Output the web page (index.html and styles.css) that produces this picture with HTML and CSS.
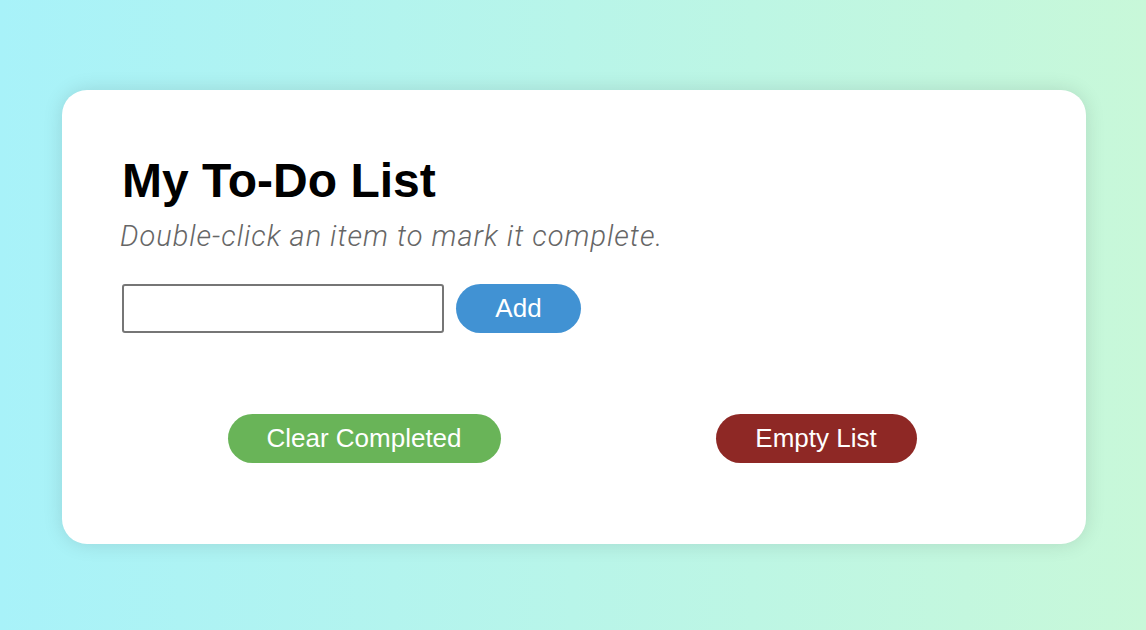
FILE: index.html
```html
<!DOCTYPE html>
<html>
<head>
<meta charset="utf-8">
<link rel="stylesheet" href="styles.css">
</head>
<body>
<div class="card">
  <h1 class="title">My To-Do List</h1>
  <p class="hint">Double-click an item to mark it complete.</p>
  <div class="add-row">
    <input class="item-input" type="text">
    <button class="btn btn-add">Add</button>
  </div>
  <ul class="todo-list"></ul>
  <div class="actions">
    <button class="btn btn-clear">Clear Completed</button>
    <button class="btn btn-empty">Empty List</button>
  </div>
</div>
</body>
</html>
```

FILE: styles.css
```css
html, body {
  margin: 0;
  height: 100%;
}
body {
  background: linear-gradient(to right, #a8f2f9, #c8f8d9);
  font-family: "Liberation Sans", Arial, sans-serif;
  padding: 90px 60px 0 62px;
  box-sizing: border-box;
}
.card {
  background: #fff;
  border-radius: 25px;
  box-shadow: 0 0 20px rgba(0, 0, 0, 0.12);
  padding: 63px 60px 0;
  height: 454px;
  box-sizing: border-box;
}
.title {
  margin: 0;
  font-size: 48px;
  line-height: 56px;
  font-weight: bold;
  color: #000;
}
.hint {
  margin: 10px 0 31px -2px;
  font-family: Roboto, "Liberation Sans", sans-serif;
  font-size: 29px;
  line-height: 34px;
  letter-spacing: 1px;
  font-style: italic;
  font-weight: 300;
  color: #666;
}
.add-row {
  display: flex;
  align-items: center;
  gap: 12px;
}
.item-input {
  width: 322px;
  height: 49px;
  box-sizing: border-box;
  border: 2px solid #767676;
  border-radius: 3px;
  margin: 0;
}
.btn {
  border: none;
  color: #fff;
  font-family: "Liberation Sans", Arial, sans-serif;
  font-size: 26px;
  height: 49px;
  border-radius: 25px;
  padding: 0;
}
.btn-add {
  background: #4192d3;
  width: 125px;
}
.todo-list {
  margin: 0;
  padding: 0;
  height: 81px;
}
.actions {
  display: flex;
  justify-content: space-around;
  margin: 0 2px 0 -2px;
}
.btn-clear {
  background: #69b458;
  width: 273px;
}
.btn-empty {
  background: #8e2825;
  width: 201px;
}
```
